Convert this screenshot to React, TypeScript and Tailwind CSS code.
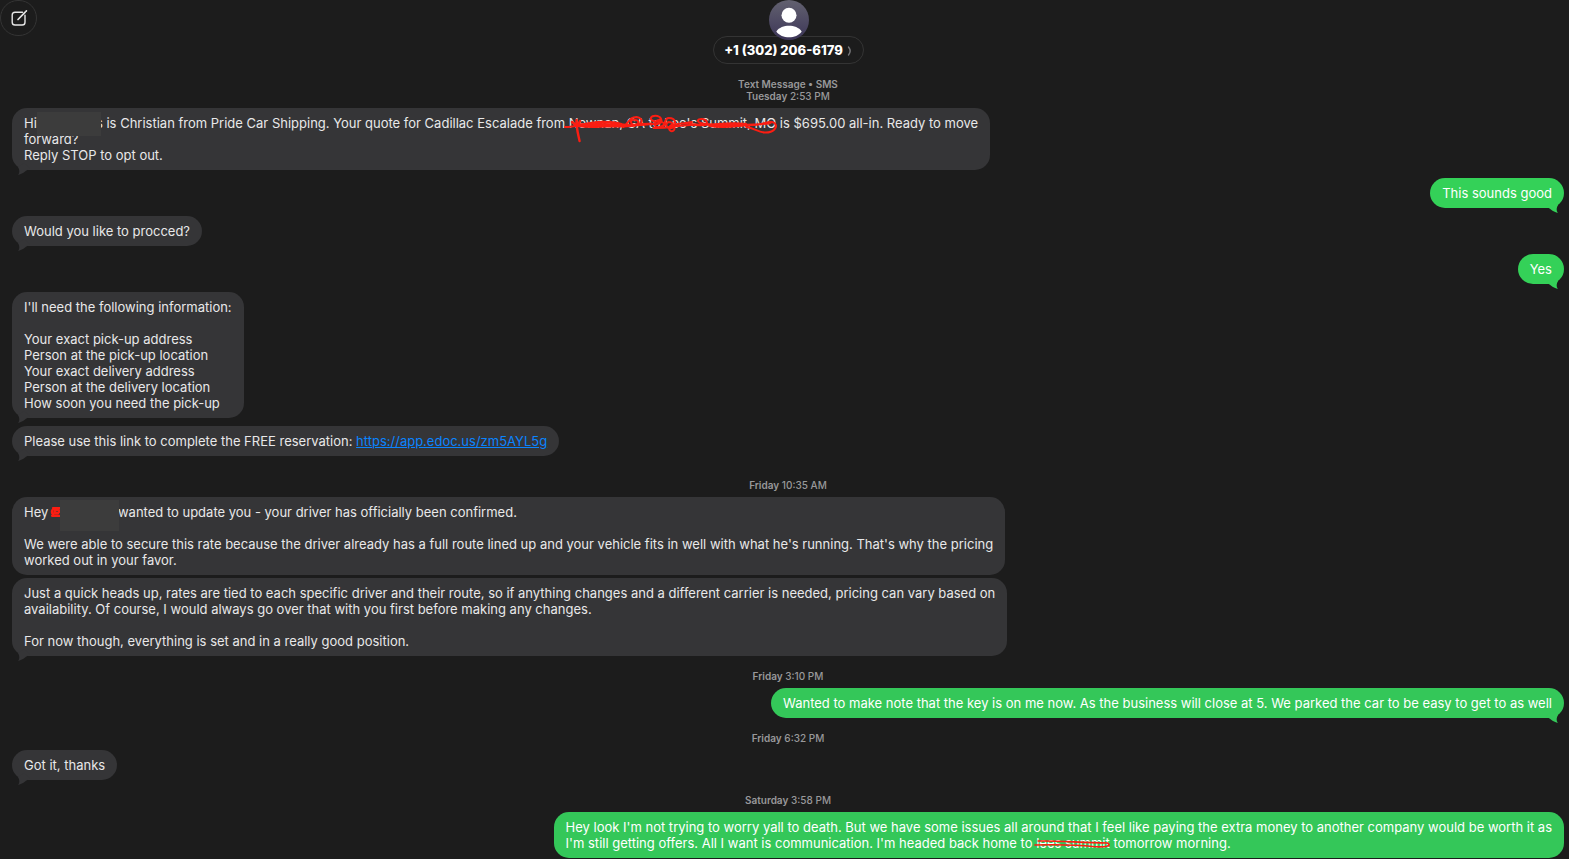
import type { ReactNode } from "react";

function Tail({ sent, bright }: { sent?: boolean; bright?: boolean }) {
  return sent ? (
    <svg className={"absolute right-[6px] -bottom-[5px] h-3 w-3 " + (bright ? "text-[#34d158]" : "text-[#34c759]")} viewBox="0 0 12 12" aria-hidden="true">
      <path d="M0 5.500 C4 7 6 10.500 11.800 12 C10 9 10.500 7 12 4 L6 0 Z" fill="currentColor" />
    </svg>
  ) : (
    <svg className="absolute left-[6px] -bottom-[5px] h-3 w-3 text-[#353537]" viewBox="0 0 12 12" aria-hidden="true">
      <path d="M12 5.500 C8 7 6 10.500 0.200 12 C2 9 1.500 7 0 4 L6 0 Z" fill="currentColor" />
    </svg>
  );
}

function Bubble({ sent, bright, tail = true, children }: { sent?: boolean; bright?: boolean; tail?: boolean; children: ReactNode }) {
  const tone = sent ? (bright ? "self-end bg-[#34d158] text-white" : "self-end bg-[#34c759] text-white") : "self-start bg-[#353537] text-[#e8e8e9]";
  return (
    <div className={"relative max-w-[66%] rounded-[15px] px-3 py-[7px] text-[13px] leading-4 whitespace-pre-line " + tone}>
      {tail && <Tail sent={sent} bright={bright} />}
      <p className="relative">{children}</p>
    </div>
  );
}

function Stamp({ day, time, spaced }: { day: string; time: string; spaced?: boolean }) {
  return (
    <p className={"mb-1.5 text-center text-[10px] leading-3 font-medium text-[#98989a] " + (spaced ? "mt-[23px]" : "mt-[14px]")}>
      <span className="font-semibold">{day}</span> {time}
    </p>
  );
}

export default function App() {
  return (
    <main className="min-h-screen bg-[#1c1c1c] font-['Inter',sans-serif]">
      <header className="relative flex flex-col items-center pl-2">
        <button aria-label="New message" className="absolute top-0 left-0 flex h-9 w-[37px] items-center justify-center rounded-full border border-[#343434] text-[#e6e6e6]">
          <svg className="size-[18px]" viewBox="0 0 18 18" fill="none" stroke="currentColor" strokeWidth="1.4" strokeLinecap="round" aria-hidden="true">
            <path d="M12.500 3.200H5Q2.200 3.200 2.200 6V13.200Q2.200 16 5 16H12.200Q15 16 15 13.200V6.200" />
            <path d="M8 10.500 L15.200 3.200 M16.200 2.100 L16.400 1.900" strokeWidth="1.700" />
          </svg>
        </button>
        <svg className="relative z-10 size-10" viewBox="0 0 40 40" aria-hidden="true">
          <defs>
            <linearGradient id="avatar" x1="0" y1="0" x2="0" y2="1">
              <stop offset="0" stopColor="#62616f" />
              <stop offset="1" stopColor="#3d3658" />
            </linearGradient>
          </defs>
          <circle cx="20" cy="20" r="20" fill="url(#avatar)" />
          <circle cx="20" cy="15.300" r="7.500" fill="#fff" />
          <path d="M7.300 31.500C10 27.500 15 25.800 20 25.800S30 27.500 32.700 31.500C30 35.500 25 37.300 20 37.300S10 35.500 7.300 31.500Z" fill="#fff" />
        </svg>
        <button className="-mt-1 flex h-7 items-center gap-1 rounded-full border border-[#343434] px-2.5 pt-px text-[13px] font-extrabold text-white">
          +1 (302) 206-6179
          <svg className="h-2.5 w-1.5" viewBox="0 0 6 10" fill="none" stroke="#77777a" strokeWidth="1.400" strokeLinecap="round" aria-hidden="true">
            <path d="M1.500 1 Q4.800 5 1.500 9" />
          </svg>
        </button>
      </header>

      <section aria-label="Conversation" className="flex flex-col pr-[5px] pb-0.5 pl-3">
        <div className="mb-1.5 pt-[14px] text-center text-[10px] leading-3 font-medium text-[#98989a]">
          <p className="font-semibold">Text Message • SMS</p>
          <p><span className="font-semibold">Tuesday</span> 2:53 PM</p>
        </div>

        <div className="flex flex-col gap-2">
          <Bubble>
            Hi
            <span className="relative inline-block h-4 w-[66px] text-right align-top">
              s<span className="absolute -top-[3px] left-0 z-10 h-6 w-[64px] bg-[#3c3c3c]" />
            </span>
            {" is Christian from Pride Car Shipping. Your quote for Cadillac Escalade from "}
            <span className="relative inline-block">
              Newnan, GA to Lee's Summit, MO
              <svg className="absolute -top-[3px] left-0 h-7 w-full overflow-visible" viewBox="0 0 206 28" preserveAspectRatio="none" fill="none" stroke="#fb1d12" strokeWidth="2" strokeLinecap="round" strokeLinejoin="round" aria-hidden="true">
                <path d="M-4 15C8 15 14 11 28 10C40 9 46 10 52 12C40 15 22 16 8 14C20 10 36 10 50 12C64 15 74 12 84 12" />
                <path d="M3 10L8 14L11 9M7.500 8C7 15 9 22 10.500 29M8 12C26 13 40 15 58 14C66 14 72 11 82 12M14 13C30 11 44 13 56 13" strokeWidth="2.400" />
                <path d="M54 15C60 10 60 5 67 5C75 6 73 14 66 13C59 12 61 7 66 8C71 9 69 13 64 13" />
                <path d="M70 13C76 13 78 11 84 12C92 13 93 8 90 5C85 2 79 5 82 8C85 11 94 9 96 12C92 16 84 17 85 11C86 8 90 7 92 9" />
                <path d="M92 15C97 12 94 6 99 6C107 6 107 14 102 16C96 17 95 11 99 10C105 10 106 18 103 19C99 20 98 15 102 13C109 11 115 12 122 10" />
                <path d="M84 16C98 17 106 13 120 13C130 13 137 14 137 11C137 6 127 6 128 9C129 13 140 11 145 14" />
                <path d="M120 12C142 15 154 9 176 12C160 15 146 12 140 14C156 17 170 13 184 13C194 12 200 8 204 11C208 15 203 21 194 20.500C187 20 184 16 176 15M172 13C182 12 192 13 200 11" />
              </svg>
            </span>
            {" is $695.00 all-in. Ready to move\nforward?\nReply STOP to opt out."}
          </Bubble>
          <Bubble sent bright>This sounds good</Bubble>
          <Bubble>Would you like to procced?</Bubble>
          <Bubble sent bright>Yes</Bubble>
          <Bubble>{"I'll need the following information:\n\nYour exact pick-up address\nPerson at the pick-up location\nYour exact delivery address\nPerson at the delivery location\nHow soon you need the pick-up"}</Bubble>
          <Bubble>
            {"Please use this link to complete the FREE reservation: "}
            <a href="https://app.edoc.us/zm5AYL5g" className="text-[#0a84ff] underline">https://app.edoc.us/zm5AYL5g</a>
          </Bubble>
        </div>

        <Stamp day="Friday" time="10:35 AM" spaced />
        <div className="flex flex-col gap-[3px]">
          <Bubble tail={false}>
            {"Hey "}
            <span className="relative inline-block h-4 w-[66px] align-top">
              <svg className="absolute top-[3px] left-0 h-2.5 w-2.5 overflow-visible" viewBox="0 0 10 10" fill="none" stroke="#fb1d12" strokeWidth="2.200" strokeLinecap="round" aria-hidden="true">
                <path d="M1.500 8.500C-1.500 5 0 1 4 2C9 2 8 7 4 6C0 5 4 2 8 4M0 8.800H8.500M1 1H8.500M1 6.500H6" />
              </svg>
              <span className="absolute -top-1 left-2 h-[31px] w-[59px] bg-[#3c3c3c]" />
            </span>
            {"wanted to update you - your driver has officially been confirmed.\n\nWe were able to secure this rate because the driver already has a full route lined up and your vehicle fits in well with what he's running. That's why the pricing\nworked out in your favor."}
          </Bubble>
          <Bubble>{"Just a quick heads up, rates are tied to each specific driver and their route, so if anything changes and a different carrier is needed, pricing can vary based on\navailability. Of course, I would always go over that with you first before making any changes.\n\nFor now though, everything is set and in a really good position."}</Bubble>
        </div>

        <Stamp day="Friday" time="3:10 PM" />
        <Bubble sent>Wanted to make note that the key is on me now. As the business will close at 5. We parked the car to be easy to get to as well</Bubble>
        <Stamp day="Friday" time="6:32 PM" />
        <Bubble>Got it, thanks</Bubble>
        <Stamp day="Saturday" time="3:58 PM" />
        <Bubble sent tail={false}>
          {"Hey look I'm not trying to worry yall to death. But we have some issues all around that I feel like paying the extra money to another company would be worth it as\nI'm still getting offers. All I want is communication. I'm headed back home to "}
          <span className="relative inline-block">
            lees summit
            <svg className="absolute top-[5px] left-0 h-2 w-full overflow-visible" viewBox="0 0 70 8" preserveAspectRatio="none" fill="none" stroke="#fb1d12" strokeWidth="1.600" strokeLinecap="round" aria-hidden="true">
              <path d="M2 1C18 0.500 42 2.500 68 3C73 6 66 7.500 54 6.500C38 4.500 19 4.500 -1 5" />
            </svg>
          </span>
          {" tomorrow morning."}
        </Bubble>
      </section>
    </main>
  );
}
